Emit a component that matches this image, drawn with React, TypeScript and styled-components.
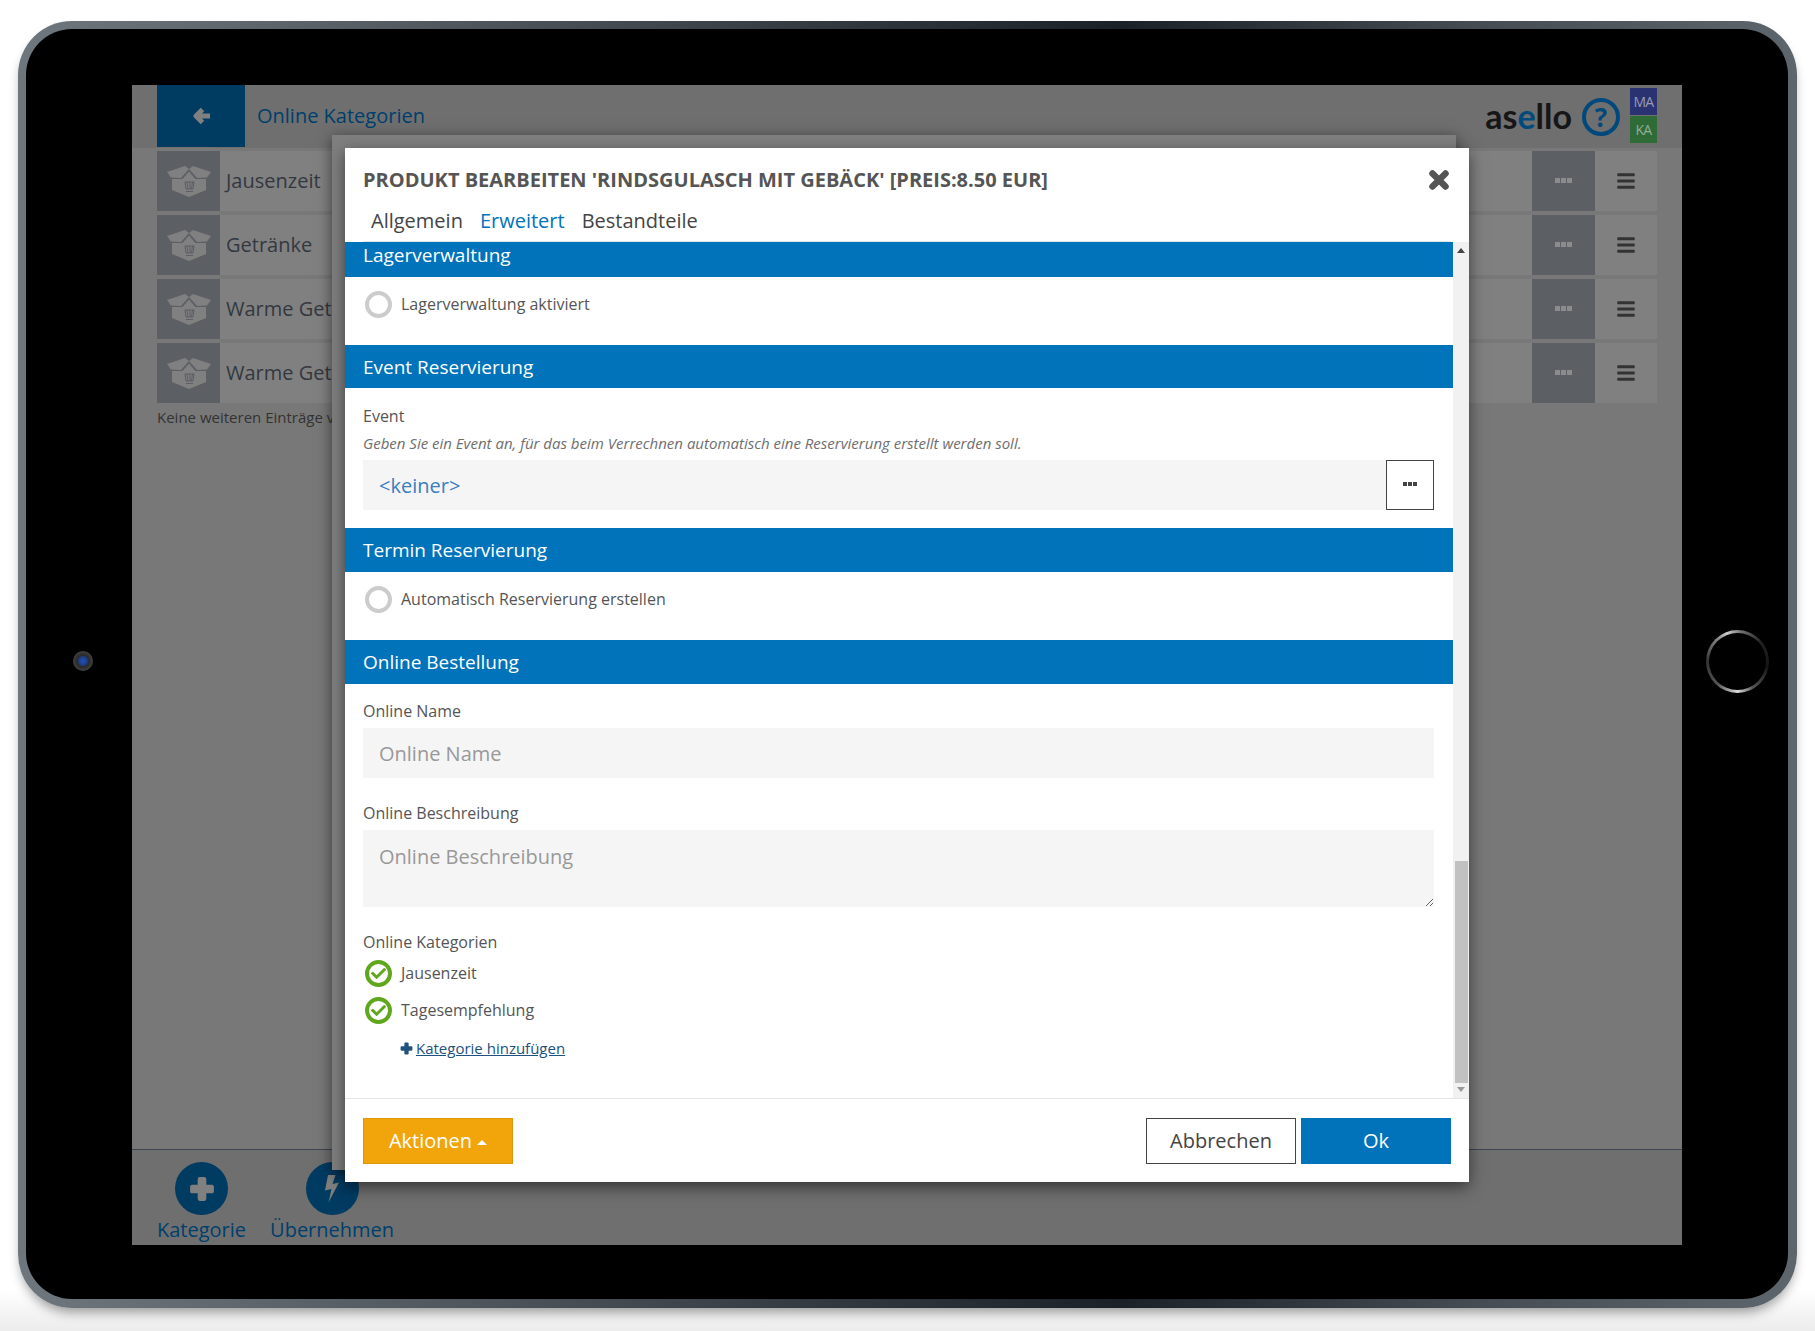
import { createGlobalStyle, styled } from 'styled-components'
import { FaBars, FaCheck } from 'react-icons/fa'

const rows = ['Jausenzeit', 'Getränke', 'Warme Getränke', 'Warme Getränke']

const GlobalStyle = createGlobalStyle`
  html, body { margin: 0; padding: 0; background: #fff; }
  body { font-family: "Open Sans", "Liberation Sans", sans-serif; color: #333; }
  * { box-sizing: border-box; }
`

const Page = styled.div`
  width: 1815px;
  height: 1331px;
  padding: 21px 18px 23px 18px;
  overflow: hidden;
  background: linear-gradient(to bottom, #fff 0, #fff 1290px, #ececec 1331px);
`

const Tablet = styled.div`
  position: relative;
  height: 100%;
  padding: 8px 9px 9px 8px;
  border-radius: 54px;
  background: linear-gradient(to right, #6f777e 0, #4f565d 25%, #1a2128 62%, #454c53 82%, #5e666d 100%);
  box-shadow: 0 7px 12px -3px rgba(0, 0, 0, 0.4);
`

const Bezel = styled.div`
  height: 100%;
  padding: 56px 106px 54px 106px;
  border-radius: 46px;
  background: #000;
`

const Camera = styled.div`
  position: absolute;
  left: 55px;
  top: 630px;
  width: 20px;
  height: 20px;
  border-radius: 50%;
  background: radial-gradient(circle, #2350b4 0, #1c3f8c 28%, #2a2a2a 42%, #4a4a4a 80%, #1a1a1a 100%);
`

const HomeButton = styled.div`
  position: absolute;
  right: 28px;
  top: 609px;
  width: 63px;
  height: 63px;
  border-radius: 50%;
  background: conic-gradient(from -20deg, #cfcfcf 0, #777 25deg, #222 70deg, #151515 120deg, #555 170deg, #ddd 200deg, #555 240deg, #333 290deg, #888 340deg, #cfcfcf 360deg);
  &::after {
    content: '';
    position: absolute;
    inset: 3px;
    border-radius: 50%;
    background: #000;
  }
`

const Screen = styled.div`
  position: relative;
  height: 100%;
  display: flex;
  flex-direction: column;
  background: #787878;
  overflow: hidden;
`

const Header = styled.div`
  height: 63px;
  flex: none;
  display: flex;
  align-items: center;
  padding: 0 25px;
  background: #6f6f6f;
`

const BackButton = styled.div`
  width: 88px;
  height: 62px;
  margin-bottom: 1px;
  display: flex;
  align-items: center;
  justify-content: center;
  background: #003b62;
  color: #808080;
`

const PageTitle = styled.div`
  margin: 0 0 2px 12px;
  flex: 1;
  font-size: 20px;
  color: #003f6b;
`

const Logo = styled.div`
  font-family: Lato, sans-serif;
  font-size: 34px;
  font-weight: 700;
  color: #161616;
  margin-bottom: 2px;
  span { color: #004a7c; }
`

const HelpIcon = styled.div`
  width: 38px;
  height: 38px;
  margin: 0 10px 0 10px;
  display: flex;
  align-items: center;
  justify-content: center;
  border: 4px solid #00497c;
  border-radius: 50%;
  color: #00497c;
  font-size: 26px;
  font-weight: 700;
`

const UserStack = styled.div`
  display: flex;
  flex-direction: column;
  gap: 1px;
  margin-top: -3px;
`

const UserBadge = styled.div<{ $bg: string; $fg: string }>`
  width: 27px;
  height: 27px;
  display: flex;
  align-items: center;
  justify-content: center;
  background: ${(p) => p.$bg};
  color: ${(p) => p.$fg};
  font-size: 14px;
  letter-spacing: -0.8px;
`

const List = styled.div`
  flex: 1;
  display: flex;
  flex-direction: column;
  gap: 4px;
  padding: 3px 25px 0;
`

const Row = styled.div`
  height: 60px;
  display: flex;
  align-items: stretch;
  background: #808080;
`

const RowIcon = styled.div`
  width: 63px;
  display: flex;
  align-items: center;
  justify-content: center;
  background: #5c5f63;
  color: #808080;
`

const RowName = styled.div`
  flex: 1;
  padding: 0 0 2px 6px;
  display: flex;
  align-items: center;
  font-size: 20px;
  color: #333840;
`

const RowDots = styled.div`
  width: 63px;
  display: flex;
  align-items: center;
  justify-content: center;
  background: #5c5f63;
`

const RowMenu = styled.div`
  width: 62px;
  display: flex;
  align-items: center;
  justify-content: center;
  color: #333;
  font-size: 20px;
`

const Dots = styled.div<{ $color: string; $size: number }>`
  display: flex;
  gap: 1px;
  margin-top: -2px;
  i {
    width: ${(p) => p.$size}px;
    height: ${(p) => p.$size}px;
    background: ${(p) => p.$color};
  }
`

const EndNote = styled.div`
  font-size: 15px;
  color: #333;
`

const BottomBar = styled.div`
  height: 96px;
  flex: none;
  display: flex;
  gap: 24px;
  padding: 12px 25px 0;
  border-top: 1px solid #3c4650;
  background: #6f6f6f;
`

const BarAction = styled.div`
  display: flex;
  flex-direction: column;
  align-items: center;
  gap: 1px;
  font-size: 20px;
  line-height: 27px;
  color: #003f6b;
`

const BarCircle = styled.div`
  width: 53px;
  height: 53px;
  display: flex;
  align-items: center;
  justify-content: center;
  border-radius: 50%;
  background: #003b62;
  color: #808080;
`

const BackSheet = styled.div`
  position: absolute;
  left: 200px;
  top: 50px;
  width: 1124px;
  height: 1035px;
  background: #7f7f7f;
  box-shadow: 0 3px 14px rgba(0, 0, 0, 0.5);
`

const Modal = styled.div`
  position: absolute;
  left: 213px;
  top: 63px;
  width: 1124px;
  height: 1034px;
  display: flex;
  flex-direction: column;
  background: #fff;
  box-shadow: 0 5px 15px rgba(0, 0, 0, 0.5);
`

const ModalHeader = styled.div`
  height: 94px;
  flex: none;
  padding: 0 18px;
`

const TitleRow = styled.div`
  height: 54px;
  padding-top: 8px;
  display: flex;
  align-items: center;
  justify-content: space-between;
`

const ModalTitle = styled.div`
  font-size: 20px;
  font-weight: 700;
  color: #555;
  text-transform: uppercase;
`

const CloseIcon = styled.div`
  display: flex;
  color: #555;
  margin: 1px 1px 0 0;
`

const Tabs = styled.div`
  display: flex;
  gap: 17px;
  padding: 0 0 3px 8px;
  height: 40px;
  align-items: center;
  border-bottom: 1px solid #dfe6ea;
`

const Tab = styled.div<{ $active?: boolean }>`
  font-size: 20px;
  color: ${(p) => (p.$active ? '#0073bb' : '#444')};
`

const ModalBody = styled.div`
  flex: 1;
  min-height: 0;
  display: flex;
`

const Content = styled.div`
  flex: 1;
  min-width: 0;
`

const Band = styled.div<{ $height: number; $clipped?: boolean }>`
  height: ${(p) => p.$height}px;
  padding: ${(p) => (p.$clipped ? '0 18px 10px' : '0 18px')};
  display: flex;
  align-items: center;
  background: #0073bb;
  color: #fff;
  font-size: 19px;
`

const Section = styled.div<{ $height: number; $top: number }>`
  height: ${(p) => p.$height}px;
  padding: ${(p) => p.$top}px 19px 0 18px;
`

const OptionRow = styled.div`
  height: 37px;
  padding-bottom: 1px;
  display: flex;
  align-items: center;
  gap: 9px;
  font-size: 16px;
  color: #555;
`

const RadioOff = styled.div`
  width: 27px;
  height: 27px;
  margin-left: 2px;
  border: 4px solid #ccc;
  border-radius: 50%;
`

const RadioOn = styled.div`
  width: 27px;
  height: 27px;
  margin-left: 2px;
  display: flex;
  align-items: center;
  justify-content: center;
  border: 4px solid #5fa81e;
  border-radius: 50%;
  color: #5fa81e;
  font-size: 15px;
`

const FieldLabel = styled.div<{ $gap?: number }>`
  height: 22px;
  margin-top: ${(p) => p.$gap ?? 0}px;
  display: flex;
  align-items: center;
  font-size: 16px;
  color: #555;
`

const Hint = styled.div`
  height: 22px;
  margin-top: 5px;
  display: flex;
  align-items: center;
  font-size: 15px;
  font-style: italic;
  color: #6e6e6e;
`

const InputGroup = styled.div`
  display: flex;
  height: 50px;
  margin-top: 6px;
`

const LookupValue = styled.div`
  flex: 1;
  padding-left: 16px;
  display: flex;
  align-items: center;
  background: #f5f5f5;
  color: #3a7fbf;
  font-size: 20px;
`

const LookupButton = styled.div`
  width: 48px;
  display: flex;
  align-items: center;
  justify-content: center;
  border: 1px solid #444;
  background: #fff;
`

const TextInput = styled.input`
  display: block;
  width: 100%;
  height: 50px;
  margin-top: 6px;
  padding: 1px 16px 0;
  border: 0;
  outline: 0;
  background: #f5f5f5;
  font-family: inherit;
  font-size: 20px;
  &::placeholder { color: #999; }
`

const TextArea = styled.textarea`
  display: block;
  width: 100%;
  height: 77px;
  margin-top: 6px;
  padding: 13px 16px;
  border: 0;
  outline: 0;
  background: #f5f5f5;
  font-family: inherit;
  font-size: 20px;
  &::placeholder { color: #999; }
`

const CategoryList = styled.div`
  margin-top: 2px;
`

const AddLink = styled.a`
  display: block;
  margin: 9px 0 0 37px;
  font-size: 15px;
  color: #20527f;
  text-decoration: underline;
  svg { vertical-align: -1px; margin-right: 3px; }
`

const ScrollTrack = styled.div`
  width: 16px;
  flex: none;
  display: flex;
  flex-direction: column;
  align-items: center;
  padding-top: 6px;
  background: #f1f1f1;
`

const ArrowUp = styled.div`
  width: 0;
  height: 0;
  border: 4px solid transparent;
  border-top: 0;
  border-bottom: 5px solid #444;
`

const ScrollThumb = styled.div`
  width: 13px;
  height: 222px;
  margin-top: auto;
  background: #c1c1c1;
`

const ArrowDown = styled.div`
  width: 0;
  height: 0;
  margin: 4px 0 6px;
  border: 4px solid transparent;
  border-bottom: 0;
  border-top: 5px solid #999;
`

const ModalFooter = styled.div`
  height: 84px;
  flex: none;
  display: flex;
  align-items: flex-start;
  gap: 5px;
  padding: 19px 18px 0 18px;
  border-top: 1px solid #e5e5e5;
`

const Button = styled.div<{ $variant: 'warning' | 'default' | 'primary' }>`
  width: 150px;
  height: 46px;
  padding-bottom: 1px;
  display: flex;
  align-items: center;
  justify-content: center;
  gap: 5px;
  font-size: 20px;
  margin-right: ${(p) => (p.$variant === 'warning' ? 'auto' : '0')};
  border: 1px solid
    ${(p) => (p.$variant === 'warning' ? '#dc960a' : p.$variant === 'primary' ? '#0073bb' : '#444')};
  background: ${(p) => (p.$variant === 'warning' ? '#f2a40b' : p.$variant === 'primary' ? '#0073bb' : '#fff')};
  color: ${(p) => (p.$variant === 'default' ? '#444' : '#fff')};
`

const Caret = styled.span`
  width: 0;
  height: 0;
  margin-top: 4px;
  border: 5px solid transparent;
  border-top: 0;
  border-bottom: 5px solid #fff;
`

const BoxIcon = () => (
  <svg width="44" height="31" viewBox="0 0 44 31">
    <path fill="currentColor" d="M0 6 18 0l4 3-8 9-10-.5zM44 6 26 0l-4 3 8 9 10-.5z" />
    <path fill="currentColor" d="M5 13h10l7-8 7 8h10v11l-17 7-17-7z" />
    <path fill="none" stroke="#5c5f63" strokeWidth="1" d="M15 13l7-8 7 8M18 16h9l-1 7h-7zM20 16l1 7M23 16v7M25.500 16l-1 7M19 25.500h7" />
  </svg>
)

const BackArrow = () => (
  <svg width="17" height="18" viewBox="0 0 17 18">
    <path fill="none" stroke="currentColor" strokeWidth="5" strokeLinejoin="round" d="M9.500 2.500 3 9l6.500 6.500M4 9h13" />
  </svg>
)

const PlusIcon = ({ size }: { size: number }) => (
  <svg width={size} height={size} viewBox="0 0 24 24">
    <path fill="currentColor" d="M8 3a2 2 0 0 1 2-2h4a2 2 0 0 1 2 2v5h5a2 2 0 0 1 2 2v4a2 2 0 0 1-2 2h-5v5a2 2 0 0 1-2 2h-4a2 2 0 0 1-2-2v-5H3a2 2 0 0 1-2-2v-4a2 2 0 0 1 2-2h5z" />
  </svg>
)

const BoltIcon = () => (
  <svg width="16" height="29" viewBox="0 0 16 29">
    <path fill="currentColor" d="M4 1h7.500L8.500 10 15 8.500 4.500 28.500 7.500 15 1 16.500z" />
  </svg>
)

const CloseGlyph = () => (
  <svg width="22" height="22" viewBox="0 0 22 22">
    <path fill="none" stroke="currentColor" strokeWidth="6.500" strokeLinecap="round" d="M4.500 4.500 17.500 17.500M17.500 4.500 4.500 17.500" />
  </svg>
)

const ThreeDots = ({ color, size }: { color: string; size: number }) => (
  <Dots $color={color} $size={size}>
    <i />
    <i />
    <i />
  </Dots>
)

export default function App() {
  return (
    <>
      <GlobalStyle />
      <Page>
        <Tablet>
          <Camera />
          <HomeButton />
          <Bezel>
            <Screen>
              <Header>
                <BackButton>
                  <BackArrow />
                </BackButton>
                <PageTitle>Online Kategorien</PageTitle>
                <Logo>
                  as<span>e</span>llo
                </Logo>
                <HelpIcon>?</HelpIcon>
                <UserStack>
                  <UserBadge $bg="#2a3272" $fg="#9a9ab4">MA</UserBadge>
                  <UserBadge $bg="#2e6b37" $fg="#94ad96">KA</UserBadge>
                </UserStack>
              </Header>

              <List>
                {rows.map((name, i) => (
                  <Row key={i}>
                    <RowIcon>
                      <BoxIcon />
                    </RowIcon>
                    <RowName>{name}</RowName>
                    <RowDots>
                      <ThreeDots color="#8c8c8c" size={5} />
                    </RowDots>
                    <RowMenu>
                      <FaBars />
                    </RowMenu>
                  </Row>
                ))}
                <EndNote>Keine weiteren Einträge vorhanden</EndNote>
              </List>

              <BottomBar>
                <BarAction>
                  <BarCircle>
                    <PlusIcon size={26} />
                  </BarCircle>
                  Kategorie
                </BarAction>
                <BarAction>
                  <BarCircle>
                    <BoltIcon />
                  </BarCircle>
                  Übernehmen
                </BarAction>
              </BottomBar>

              <BackSheet />
              <Modal>
                <ModalHeader>
                  <TitleRow>
                    <ModalTitle>Produkt bearbeiten 'Rindsgulasch mit Gebäck' [Preis:8.50 EUR]</ModalTitle>
                    <CloseIcon>
                      <CloseGlyph />
                    </CloseIcon>
                  </TitleRow>
                  <Tabs>
                    <Tab>Allgemein</Tab>
                    <Tab $active>Erweitert</Tab>
                    <Tab>Bestandteile</Tab>
                  </Tabs>
                </ModalHeader>

                <ModalBody>
                  <Content>
                    <Band $height={35} $clipped>Lagerverwaltung</Band>
                    <Section $height={68} $top={9}>
                      <OptionRow>
                        <RadioOff />
                        Lagerverwaltung aktiviert
                      </OptionRow>
                    </Section>

                    <Band $height={43}>Event Reservierung</Band>
                    <Section $height={140} $top={17}>
                      <FieldLabel>Event</FieldLabel>
                      <Hint>Geben Sie ein Event an, für das beim Verrechnen automatisch eine Reservierung erstellt werden soll.</Hint>
                      <InputGroup>
                        <LookupValue>&lt;keiner&gt;</LookupValue>
                        <LookupButton>
                          <ThreeDots color="#444" size={4} />
                        </LookupButton>
                      </InputGroup>
                    </Section>

                    <Band $height={44}>Termin Reservierung</Band>
                    <Section $height={68} $top={9}>
                      <OptionRow>
                        <RadioOff />
                        Automatisch Reservierung erstellen
                      </OptionRow>
                    </Section>

                    <Band $height={44}>Online Bestellung</Band>
                    <Section $height={412} $top={16}>
                      <FieldLabel>Online Name</FieldLabel>
                      <TextInput placeholder="Online Name" readOnly />
                      <FieldLabel $gap={24}>Online Beschreibung</FieldLabel>
                      <TextArea placeholder="Online Beschreibung" readOnly />
                      <FieldLabel $gap={24}>Online Kategorien</FieldLabel>
                      <CategoryList>
                        <OptionRow>
                          <RadioOn>
                            <FaCheck />
                          </RadioOn>
                          Jausenzeit
                        </OptionRow>
                        <OptionRow>
                          <RadioOn>
                            <FaCheck />
                          </RadioOn>
                          Tagesempfehlung
                        </OptionRow>
                      </CategoryList>
                      <AddLink>
                        <PlusIcon size={13} />
                        Kategorie hinzufügen
                      </AddLink>
                    </Section>
                  </Content>
                  <ScrollTrack>
                    <ArrowUp />
                    <ScrollThumb />
                    <ArrowDown />
                  </ScrollTrack>
                </ModalBody>

                <ModalFooter>
                  <Button $variant="warning">
                    Aktionen
                    <Caret />
                  </Button>
                  <Button $variant="default">Abbrechen</Button>
                  <Button $variant="primary">Ok</Button>
                </ModalFooter>
              </Modal>
            </Screen>
          </Bezel>
        </Tablet>
      </Page>
    </>
  )
}
